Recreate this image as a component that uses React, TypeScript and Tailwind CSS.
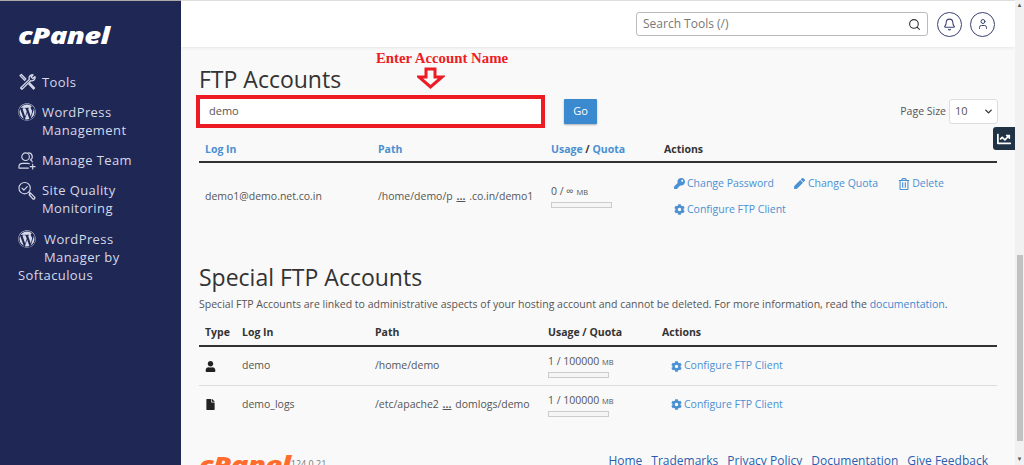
import { Bell, ChevronDown, Search, User } from "lucide-react";
import { FaChartLine, FaCog, FaFile, FaKey, FaPen, FaRegTrashAlt, FaUser, FaWordpress } from "react-icons/fa";

const ToolsIcon = () => (
  <svg width="18" height="18" viewBox="0 0 18 18" fill="none" stroke="currentColor" strokeWidth="1.3" strokeLinejoin="round">
    <path d="M15 1.8a3.4 3.4 0 0 0-3.7 4.6L2.6 15l1.4 1.4 8.6-8.7A3.4 3.4 0 0 0 17 3.6l-2.2 2-1.6-1.6z" />
    <path d="M2 2.6 3.4 1.5 7.8 6l-1.2 1.2zM10.6 10.8l4.9 5.2 1-1-5-5.2" />
  </svg>
);

const TeamIcon = () => (
  <svg width="19" height="19" viewBox="0 0 19 19" fill="none" stroke="currentColor" strokeWidth="1.2" strokeLinecap="round">
    <circle cx="8" cy="5.5" r="4" />
    <path d="M1 17.5v-1.5c0-2 1.800-3.500 4-3.500h5c.8 0 1.500.2 2 .5M1 17.500h10" />
    <path d="M11 1.500a4 4 0 0 1 2 7.500M14 9.500c.5.200 1 .5 1 1.500" />
    <path d="M15.500 13.500v5M13 16h5" />
  </svg>
);

const QualityIcon = () => (
  <svg width="19" height="19" viewBox="0 0 19 19" fill="none" stroke="currentColor" strokeWidth="1.2" strokeLinecap="round" strokeLinejoin="round">
    <circle cx="7" cy="7" r="6" />
    <path d="m4.200 7 2 2 3.500-3.700" />
    <path d="m11.500 11.500 1.500 1.500" />
    <path d="m13 12 4.500 4.500a1.300 1.300 0 0 1-1.800 1.800L11.800 14z" strokeWidth="1.400" />
  </svg>
);

const Quota = ({ label }: { label: string }) => (
  <div className="flex flex-col">
    <p className="text-[10.5px] leading-[14px] text-[#555]">
      {label} <span className="text-[7.5px]">MB</span>
    </p>
    <div className="mt-[3px] h-[6px] w-[61px] border border-[#ccc] bg-[#f5f5f5]"></div>
  </div>
);

const ConfigureLink = () => (
  <a className="flex items-center gap-[2px] text-[#4a90d2]">
    <FaCog className="text-[11px]" />
    Configure FTP Client
  </a>
);

const SpecialRow = ({ icon, login, path, last }: { icon: React.ReactNode; login: string; path: React.ReactNode; last?: boolean }) => (
  <div className={`grid h-[38.5px] grid-cols-[37px_133px_173px_123px_1fr] items-center px-[6px] ${last ? "" : "border-b border-[#ddd] pt-[1px]"}`}>
    <div className="text-[11px] text-[#222]">{icon}</div>
    <div>{login}</div>
    <div>{path}</div>
    <Quota label="1 / 100000" />
    <div><ConfigureLink /></div>
  </div>
);

const NavItem = ({ icon, children, className }: { icon: React.ReactNode; children: React.ReactNode; className?: string }) => (
  <div className={`flex items-start gap-[6px] text-[13px] leading-[18px] tracking-[0.4px] text-[#d5d9e8] ${className ?? ""}`}>
    <span className="flex h-[18px] w-[18px] shrink-0 items-center justify-center">{icon}</span>
    <span>{children}</span>
  </div>
);

export default function App() {
  return (
    <div className="flex h-[465px] w-[1024px] overflow-hidden bg-[#f9f9f9] text-[10.5px] text-[#555] [font-family:'Open_Sans',sans-serif]">
      {/* sidebar */}
      <aside className="w-[181px] shrink-0 border-t border-[#aaa] bg-[#1f2754] pl-[18px] text-white">
        <div className="mt-[19px] h-[32px] origin-left scale-x-[1.33] text-[22px] font-extrabold italic leading-[30px] tracking-[-0.5px]">cPanel</div>
        <div className="mt-[21px] flex flex-col">
          <NavItem icon={<ToolsIcon />}>Tools</NavItem>
          <NavItem className="mt-[12px]" icon={<FaWordpress size={18} />}>WordPress<br />Management</NavItem>
          <NavItem className="mt-[12px]" icon={<TeamIcon />}>Manage Team</NavItem>
          <NavItem className="mt-[12px]" icon={<QualityIcon />}>Site Quality<br />Monitoring</NavItem>
          <div className="mt-[13px] text-[13px] leading-[18px] tracking-[0.4px] text-[#d5d9e8]">
            <FaWordpress size={18} className="mr-[8px] inline align-[-4px]" />
            WordPress
            <br />
            <span className="ml-[26px]">Manager by</span>
            <br />
            Softaculous
          </div>
        </div>
      </aside>

      {/* main */}
      <div className="flex min-w-0 flex-1 flex-col">
        <header className="flex h-[47px] shrink-0 items-center justify-end gap-[8px] border-t border-[#ddd] bg-white pr-[20px] shadow-[0_1px_3px_rgba(0,0,0,0.08)]">
          <div className="flex h-[24px] w-[292px] items-center justify-between rounded-[3px] border border-[#bbb] px-[6px] text-[12px] text-[#777]">
            <span>Search Tools (/)</span>
            <Search size={13} className="text-[#333]" />
          </div>
          <span className="ml-[1px] flex h-[25px] w-[25px] items-center justify-center rounded-full border border-[#3a4270] text-[#3a4270]"><Bell size={13} /></span>
          <span className="flex h-[25px] w-[25px] items-center justify-center rounded-full border border-[#3a4270] text-[#3a4270]"><User size={12} /></span>
        </header>

        <main className="relative flex-1 overflow-hidden px-[18px]">
          {/* annotation */}
          <div className="absolute left-[195px] top-0 text-[14.8px] font-bold text-[#ed1c24] [font-family:'Liberation_Serif',serif]">Enter Account Name</div>
          <svg className="absolute left-[236px] top-[20px]" width="28" height="22" viewBox="0 0 28 22">
            <path d="M9 2h9v8h7L13.5 20 2 10h7z" fill="none" stroke="#ed1c24" strokeWidth="3" />
          </svg>

          <h1 className="mt-[17px] text-[23px] leading-[31px] text-[#333]">FTP Accounts</h1>
          <div className="flex items-center">
            <div className="-ml-[3px] flex h-[33px] w-[349px] items-center border-4 border-[#ed1c24] bg-white pl-[9px] text-[11px] text-[#555]">demo</div>
            <button className="ml-[19px] h-[25px] w-[33px] rounded-[1px] bg-[#3b89cf] text-[11px] text-white shadow-[0_1px_2px_rgba(0,0,0,0.3)]">Go</button>
            <div className="-mr-[1px] ml-auto flex items-center gap-[3px]">
              <span>Page Size</span>
              <div className="flex h-[25px] w-[49px] items-center justify-between rounded-[3px] border border-[#ddd] bg-white pl-[5px] pr-[3px] text-[11px]">
                10 <ChevronDown size={11} strokeWidth={3} className="text-[#333]" />
              </div>
            </div>
          </div>

          {/* accounts table */}
          <div className="mt-[10px] grid h-[25px] grid-cols-[173px_173px_113px_1fr] items-center border-b-2 border-[#333] px-[6px] font-bold">
            <span className="text-[#4a90d2]">Log In</span>
            <span className="text-[#4a90d2]">Path</span>
            <span className="text-[#333]"><span className="text-[#4a90d2]">Usage</span> / <span className="text-[#4a90d2]">Quota</span></span>
            <span className="text-[#333]">Actions</span>
          </div>
          <div className="grid h-[67px] grid-cols-[173px_173px_113px_1fr] items-center px-[6px]">
            <span>demo1@demo.net.co.in</span>
            <span>/home/demo/p <span className="mx-[1px] font-bold underline">...</span> .co.in/demo1</span>
            <div className="-mt-[2px]"><Quota label="0 / ∞" /></div>
            <div className="flex flex-col gap-[10px] pl-[10px] text-[#4a90d2]">
              <div className="flex gap-[20px]">
                <a className="flex items-center gap-[2px]"><FaKey className="text-[11px]" />Change Password</a>
                <a className="flex items-center gap-[3px]"><FaPen className="text-[11px]" />Change Quota</a>
                <a className="flex items-center gap-[2px]"><FaRegTrashAlt className="text-[12px]" />Delete</a>
              </div>
              <ConfigureLink />
            </div>
          </div>

          <h2 className="mt-[32px] text-[23px] leading-[30px] text-[#333]">Special FTP Accounts</h2>
          <p className="mt-[4px] text-[10.53px] leading-[16px] text-[#555]">
            Special FTP Accounts are linked to administrative aspects of your hosting account and cannot be deleted. For more information, read the <a className="text-[#3b89cf]">documentation</a>.
          </p>

          <div className="mt-[9px] grid h-[26px] grid-cols-[37px_133px_173px_114px_1fr] items-center border-b-2 border-[#333] px-[6px] font-bold text-[#333]">
            <span>Type</span>
            <span>Log In</span>
            <span>Path</span>
            <span>Usage / Quota</span>
            <span>Actions</span>
          </div>
          <SpecialRow icon={<FaUser />} login="demo" path="/home/demo" />
          <SpecialRow icon={<FaFile />} login="demo_logs" path={<>/etc/apache2 <span className="mx-[1px] font-bold underline">...</span> domlogs/demo</>} last />

          <footer className="mt-[25px] flex items-start justify-between">
            <div className="flex items-start">
              <span className="origin-left scale-x-[1.33] text-[22px] font-extrabold italic leading-[30px] tracking-[-0.5px] text-[#ff6c2c]">cPanel</span>
              <span className="ml-[23px] mt-[8px] text-[9px] text-[#777]">124.0.21</span>
            </div>
            <div className="mr-[9px] mt-[3px] flex gap-[9px] text-[12px] leading-[18px] text-[#2a5db0]">
              <a>Home</a><a>Trademarks</a><a>Privacy Policy</a><a>Documentation</a><a>Give Feedback</a>
            </div>
          </footer>

          {/* stats tab */}
          <div className="absolute right-0 top-[80px] flex h-[23px] w-[22px] items-center justify-center rounded-l-[3px] bg-[#1f3344] text-white">
            <FaChartLine size={14} />
          </div>
        </main>
      </div>

      {/* scrollbar */}
      <div className="flex w-[9px] shrink-0 flex-col items-center bg-[#f1f1f1] text-[6px] leading-[11px] text-[#555]">
        <span className="h-[11px]">▲</span>
        <div className="mt-[244px] h-[186px] w-[6px] bg-[#c1c1c1]"></div>
        <span className="mt-auto h-[11px]">▼</span>
      </div>
    </div>
  );
}
